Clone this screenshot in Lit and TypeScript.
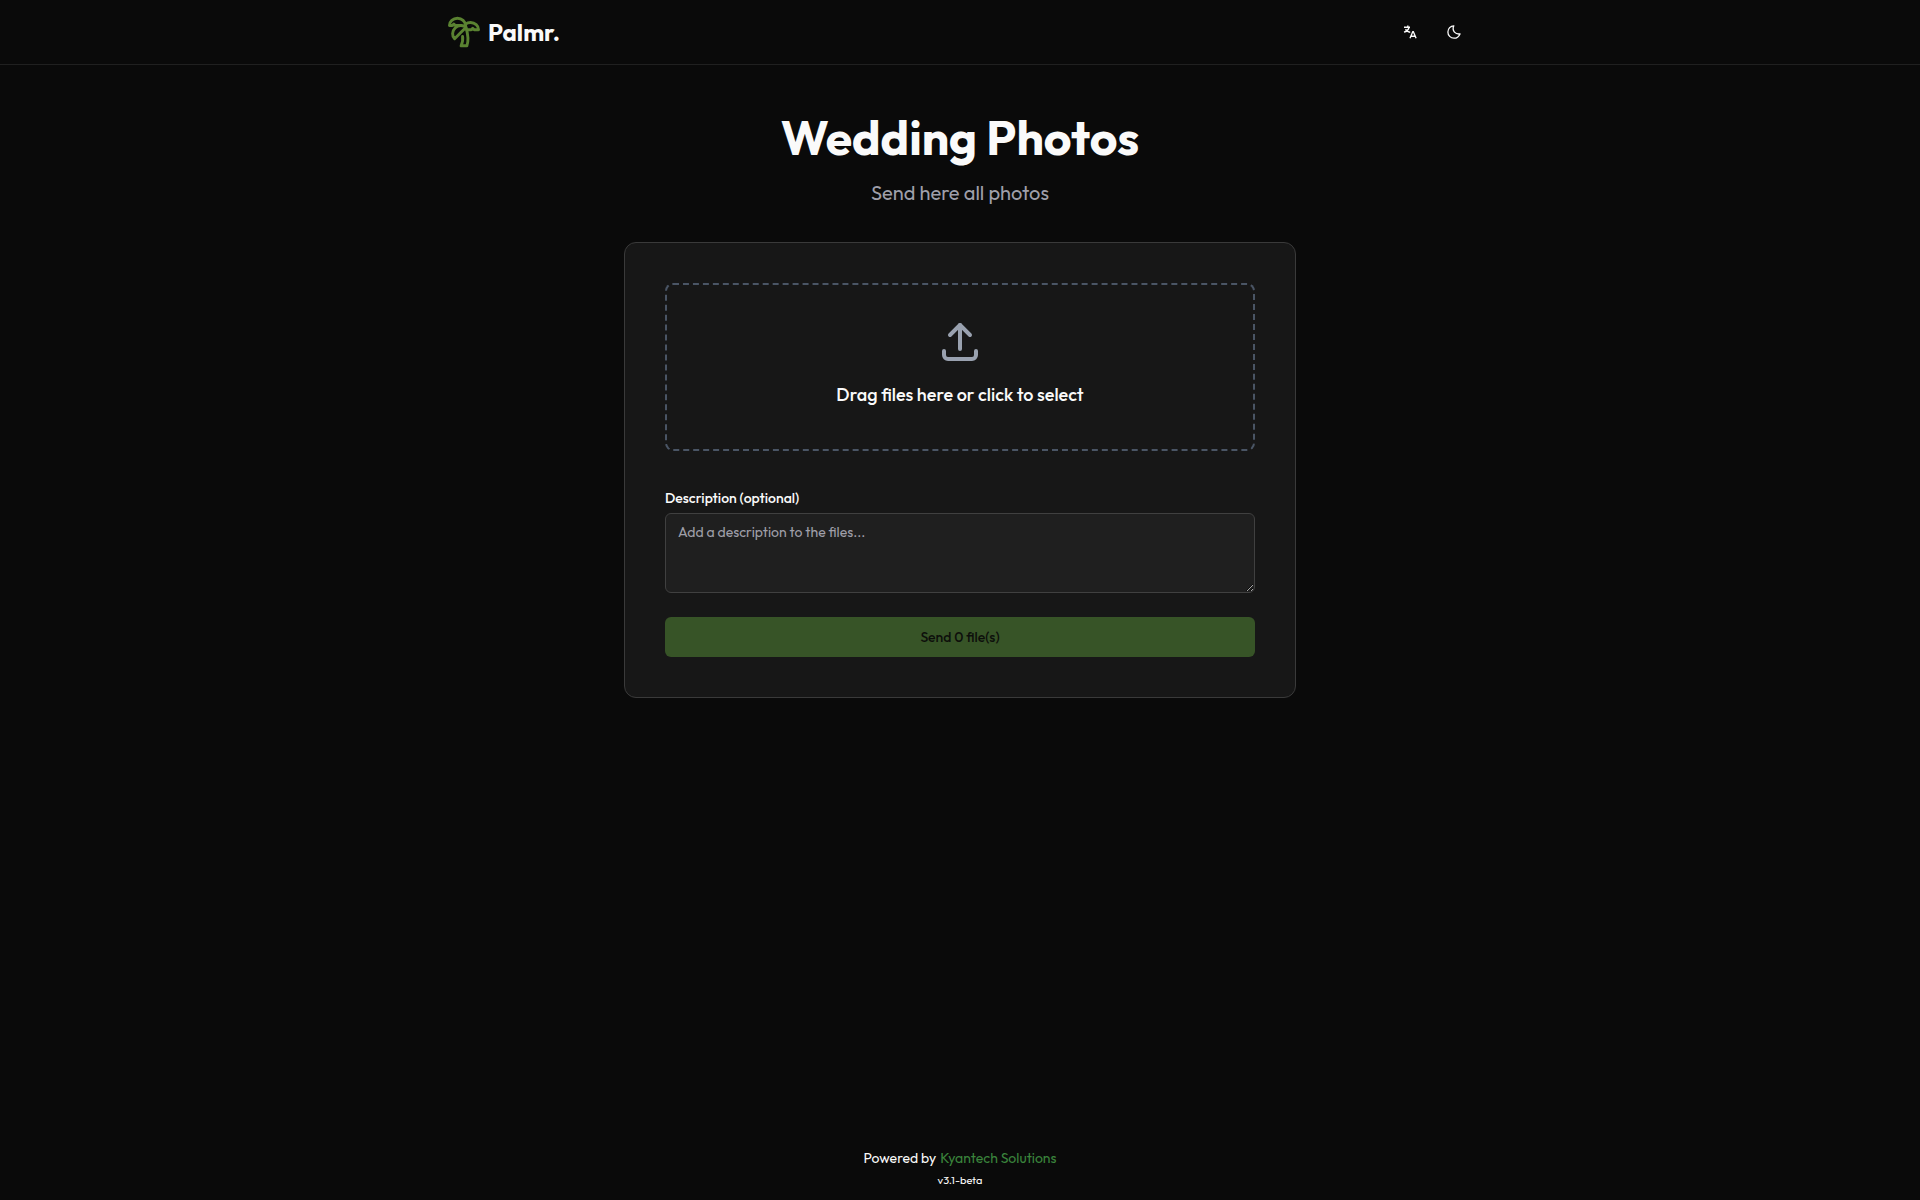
import { LitElement, html, css } from "lit";
import { customElement } from "lit/decorators.js";

@customElement("app-root")
export class AppRoot extends LitElement {
  static styles = css`
    :host {
      display: flex;
      flex-direction: column;
      min-height: 100vh;
      background: #0a0a0a;
      color: #fafafa;
      font-family: Outfit, Lato, "Liberation Sans", sans-serif;
      font-size: 14px;
      line-height: 20px;
    }
    * {
      box-sizing: border-box;
    }
    .header {
      border-bottom: 1px solid #202020;
    }
    .bar {
      display: flex;
      align-items: center;
      justify-content: space-between;
      max-width: 1024px;
      height: 64px;
      margin: 0 auto;
    }
    .brand {
      display: flex;
      align-items: center;
      gap: 8px;
      color: inherit;
      text-decoration: none;
      font-size: 24px;
      line-height: 32px;
      font-weight: 700;
    }
    .palm {
      width: 32px;
      height: 32px;
      color: #5a8231;
    }
    .tools {
      display: flex;
      gap: 8px;
    }
    .tool {
      display: flex;
      align-items: center;
      justify-content: center;
      width: 36px;
      height: 36px;
      padding: 0;
      border: 0;
      border-radius: 6px;
      background: none;
      color: inherit;
    }
    .tool svg {
      width: 14px;
      height: 14px;
    }
    .main {
      flex: 1;
      width: 100%;
      max-width: 672px;
      margin: 0 auto;
      padding-top: 48px;
    }
    .title {
      margin: 0;
      font-size: 48px;
      line-height: 48px;
      font-weight: 700;
      text-align: center;
    }
    .subtitle {
      margin: 18px 0 35px;
      font-size: 20px;
      line-height: 28px;
      text-align: center;
      color: #9f9fa9;
    }
    .card {
      display: flex;
      flex-direction: column;
      padding: 40px;
      border: 1px solid #3a3a3a;
      border-radius: 12px;
      background: #171717;
    }
    .drop {
      display: flex;
      flex-direction: column;
      align-items: center;
      gap: 16px;
      height: 168px;
      padding: 32px;
      border: 2px dashed #4a5565;
      border-radius: 8px;
      background: none;
      color: inherit;
      font: inherit;
      font-size: 18px;
      line-height: 28px;
      font-weight: 500;
    }
    .upload {
      width: 48px;
      height: 48px;
      color: #99a1af;
    }
    .label {
      margin: 37px 0 5px;
      font-weight: 500;
    }
    .field {
      display: block;
      width: 100%;
      height: 80px;
      padding: 8px 12px;
      border: 1px solid #404040;
      border-radius: 6px;
      background: #1f1f1f;
      color: inherit;
      font: inherit;
      resize: vertical;
    }
    .field::placeholder {
      color: #9f9fa9;
    }
    .send {
      height: 40px;
      margin-top: 24px;
      border: 0;
      border-radius: 6px;
      background: #375427;
      color: #0d0f0b;
      font: inherit;
      font-weight: 500;
    }
    .footer {
      display: flex;
      flex-direction: column;
      align-items: center;
      gap: 4px;
      padding-bottom: 12px;
    }
    .credit {
      display: flex;
      gap: 4px;
    }
    .link {
      color: #3a843c;
      text-decoration: none;
    }
    .version {
      font-size: 11px;
      line-height: 16px;
    }
  `;

  render() {
    return html`
      <header class="header">
        <div class="bar">
          <a class="brand" href="/">
            <svg class="palm" viewBox="1 1.5 22 22" fill="none" stroke="currentColor" stroke-width="2" stroke-linecap="round" stroke-linejoin="round" aria-hidden="true">
              <path d="M13 8c0-2.76-2.46-5-5.5-5S2 5.24 2 8h2l1-1 1 1h4" />
              <path d="M13 7.14A5.82 5.82 0 0 1 16.5 6c3.04 0 5.5 2.24 5.5 5h-3l-1-1-1 1h-3" />
              <path d="M5.89 9.71c-2.15 2.15-2.3 5.47-.35 7.43l4.24-4.25.7-.7.71-.71 2.12-2.12c-1.95-1.96-5.27-1.8-7.42.35" />
              <path d="M11 15.5c.5 2.5-.17 4.5-1 6.5h4c2-5.5-.5-12-1-14" />
            </svg>
            <span>Palmr.</span>
          </a>
          <nav class="tools">
            <button class="tool" type="button" aria-label="Change language">
              <svg viewBox="0 0 14 14" fill="none" stroke="currentColor" stroke-width="1.4" aria-hidden="true">
                <path d="M1 2.3h6M4.8.4v1.900M6 2.500C5.500 4.600 3.800 6.400 1 7.200M2.500 4.300c.8 1.700 2.300 2.700 4.700 2.900" />
                <path d="M7 13.200l2.800-6.600h.5L13.100 13.200M8 11.200h4.100" />
              </svg>
            </button>
            <button class="tool" type="button" aria-label="Toggle theme">
              <svg viewBox="0 0 14 14" fill="none" stroke="currentColor" stroke-width="1.3" stroke-linejoin="round" aria-hidden="true">
                <path d="M6.800.8C3.500.9.9 3.600.9 7a6.100 6.100 0 0 0 6.100 6.200c2.700 0 4.900-1.700 6-4.300C8.800 9.600 4.500 6 6.800.8z" />
              </svg>
            </button>
          </nav>
        </div>
      </header>
      <main class="main">
        <h1 class="title">Wedding Photos</h1>
        <p class="subtitle">Send here all photos</p>
        <form class="card">
          <button class="drop" type="button">
            <svg class="upload" viewBox="0 0 24 24" fill="none" stroke="currentColor" stroke-width="2" stroke-linecap="round" stroke-linejoin="round" aria-hidden="true">
              <path d="M4 17v2a2 2 0 0 0 2 2h12a2 2 0 0 0 2-2v-2" />
              <path d="M7 9l5-5 5 5" />
              <path d="M12 4v12" />
            </svg>
            <span>Drag files here or click to select</span>
          </button>
          <label class="label" for="description">Description (optional)</label>
          <textarea class="field" id="description" placeholder="Add a description to the files..."></textarea>
          <button class="send" type="submit" disabled>Send 0 file(s)</button>
        </form>
      </main>
      <footer class="footer">
        <span class="credit">
          <span>Powered by</span>
          <a class="link" href="#kyantech">Kyantech Solutions</a>
        </span>
        <span class="version">v3.1-beta</span>
      </footer>
    `;
  }
}
